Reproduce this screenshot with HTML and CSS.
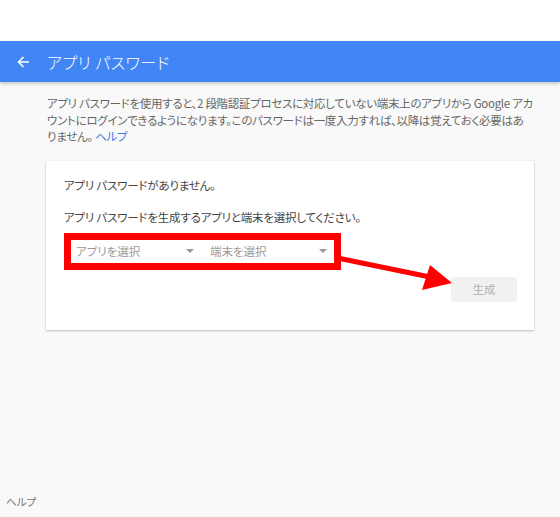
FILE: index.html
```html
<!DOCTYPE html>
<html lang="ja">
<head>
<meta charset="utf-8">
<title>アプリ パスワード</title>
<link rel="stylesheet" href="styles.css">
</head>
<body>
<div class="page">
  <div class="topstrip"></div>
  <header class="appbar">
    <svg class="back" width="14" height="14" viewBox="0 0 14 14"><path d="M13 7H2.5M7.5 2L2.5 7l5 5" fill="none" stroke="#fff" stroke-width="1.6"/></svg>
    <h1 class="title">アプリ パスワード</h1>
  </header>
  <main class="main">
    <p class="intro">アプリ パスワードを使用すると、2 段階認証プロセスに対応していない端末上のアプリから Google アカ<br>ウントにログインできるようになります。このパスワードは一度入力すれば、以降は覚えておく必要はあ<br>りません。 <a class="link" href="#">ヘルプ</a></p>
    <section class="card">
      <p class="line">アプリ パスワードがありません。</p>
      <p class="line second">アプリ パスワードを生成するアプリと端末を選択してください。</p>
      <div class="selects">
        <div class="select app"><span>アプリを選択</span><i class="caret"></i></div>
        <div class="select dev"><span>端末を選択</span><i class="caret"></i></div>
      </div>
      <div class="actions">
        <button class="gen" type="button">生成</button>
      </div>
    </section>
  </main>
  <footer class="footer">ヘルプ</footer>
  <svg class="annot" width="560" height="517" viewBox="0 0 560 517">
    <rect x="67.5" y="236.5" width="270" height="30" fill="none" stroke="#ff0000" stroke-width="7"/>
    <line x1="340" y1="258.5" x2="430" y2="277" stroke="#ff0000" stroke-width="5"/>
    <polygon points="452,283 430,265 422,290" fill="#ff0000"/>
  </svg>
</div>
</body>
</html>
```
FILE: styles.css
```css
* { box-sizing: border-box; }
html, body { margin: 0; padding: 0; }
body {
  background: #f9f9f9;
  font-family: "Noto Sans CJK JP", "Noto Sans", "Liberation Sans", sans-serif;
  font-feature-settings: "palt";
  color: #555;
}
.page {
  position: relative;
  width: 560px;
  height: 517px;
  display: flex;
  flex-direction: column;
  overflow: hidden;
}
.topstrip { height: 41px; background: #fff; flex: none; }
.appbar {
  height: 41px;
  flex: none;
  background: #4285f4;
  display: flex;
  align-items: center;
  padding-left: 16px;
  box-shadow: 0 2px 3px rgba(0,0,0,0.18);
  position: relative;
  z-index: 1;
}
.back { margin-right: 17px; margin-top: 1px; }
.title {
  margin: 0;
  font-size: 16px;
  font-weight: 300;
  color: #fff;
  letter-spacing: 0.5px;
}
.main {
  padding: 13px 0 0 46px;
  width: 536px;
}
.intro {
  margin: 0;
  font-size: 11.5px;
  line-height: 16.5px;
  color: #666;
  padding-left: 1px;
  letter-spacing: -0.3px;
  white-space: nowrap;
}
.link { color: #3b78e7; text-decoration: none; }
.card {
  margin-top: 16px;
  width: 488px;
  height: 169px;
  background: #fff;
  box-shadow: 0 1px 2px rgba(0,0,0,0.22), 0 0 1px rgba(0,0,0,0.1);
  padding: 16px 17px 0 18px;
}
.line {
  margin: 0;
  font-size: 11.5px;
  line-height: 16px;
  color: #444;
  letter-spacing: -0.2px;
}
.second { margin-top: 16px; }
.selects {
  display: flex;
  margin-top: 15px;
  margin-left: 7px;
  height: 23px;
  align-items: center;
}
.select {
  display: flex;
  align-items: center;
  justify-content: space-between;
  font-size: 11.5px;
  color: #9a9a9a;
  height: 23px;
}
.select.app { width: 129px; padding-left: 5px; padding-right: 6px; }
.select.dev { width: 134px; padding-left: 10px; padding-right: 7px; }
.caret {
  width: 0; height: 0;
  border-left: 4px solid transparent;
  border-right: 4px solid transparent;
  border-top: 4px solid #9a9a9a;
}
.actions {
  display: flex;
  justify-content: flex-end;
  margin-top: 14px;
}
.gen {
  width: 66px;
  height: 25px;
  border: none;
  background: #f1f1f1;
  color: #b0b0b0;
  font-family: inherit;
  font-size: 11.5px;
  border-radius: 2px;
  padding: 0;
}
.footer {
  margin-top: auto;
  padding: 0 0 8px 6px;
  font-size: 10.5px;
  color: #777;
}
.annot {
  position: absolute;
  left: 0;
  top: 0;
  pointer-events: none;
}
```
